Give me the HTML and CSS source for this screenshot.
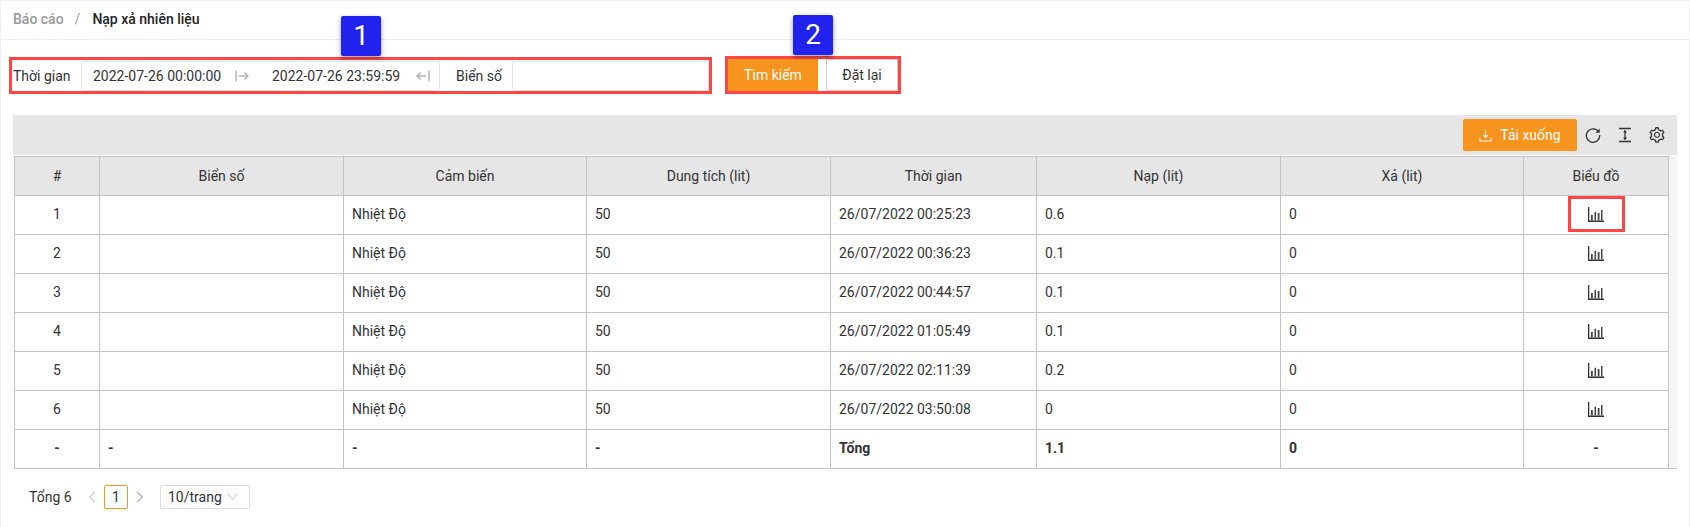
FILE: index.html
```html
<!DOCTYPE html>
<html lang="en">
<head>
    <meta charset="UTF-8">
    <title>Nạp xả nhiên liệu</title>
    <link rel="stylesheet" href="styles.css">
</head>
<body>
<svg class="defs" width="0" height="0">
    <symbol id="chart" viewBox="0 0 16 15">
        <path d="M0 0h1.300v13.400H16V15H0z" fill="#333"/>
        <path d="M3 8h1.800v5.400H3zM6.500 4.700h1.500v8.700H6.500zM9.700 6h1.800v7.400H9.700zM13 3h1.500v10.400H13z" fill="#444"/>
    </symbol>
</svg>
<div class="page">
    <div class="breadcrumb">
        <span class="crumb">Báo cáo</span>
        <span class="crumb-sep">/</span>
        <span class="crumb-now">Nạp xả nhiên liệu</span>
    </div>

    <div class="filter-row">
        <div class="filter-box">
            <span class="mark mark-one">1</span>
            <span class="label label-time">Thời gian</span>
            <div class="range">
                <span class="date date-from">2022-07-26 00:00:00</span>
                <svg class="arrow arrow-from" viewBox="0 0 14 12"><path d="M1 .5v11M4 6h9M9.500 2.500 13 6 9.500 9.500" fill="none" stroke="#b4b4b4" stroke-width="1.500"/></svg>
                <span class="date date-to">2022-07-26 23:59:59</span>
                <svg class="arrow arrow-to" viewBox="0 0 14 12"><path d="M13 .5v11M10 6H1M4.500 2.500 1 6l3.500 3.500" fill="none" stroke="#b4b4b4" stroke-width="1.500"/></svg>
            </div>
            <span class="label label-plate">Biển số</span>
            <div class="plate-input"></div>
        </div>
        <div class="button-box">
            <span class="mark mark-two">2</span>
            <button class="btn btn-search">Tìm kiếm</button>
            <button class="btn btn-reset">Đặt lại</button>
        </div>
    </div>

    <div class="toolbar">
        <button class="btn-download">
            <svg class="download-icon" viewBox="0 0 14 14"><path d="M7 1v8M4.500 6.500 7 9l2.500-2.500M1 9.500V13h12V9.500" fill="none" stroke="#fff" stroke-width="1.100"/></svg>
            Tải xuống
        </button>
        <svg class="tool-icon" viewBox="0 0 16 16"><path d="M13.800 5.200A6.700 6.700 0 1 0 14.700 8" fill="none" stroke="#333" stroke-width="1.300"/><path d="M14.700 1.500v4.200h-4.200z" fill="#333"/></svg>
        <svg class="tool-icon" viewBox="0 0 16 16"><path d="M2 1.500h12M2 14.500h12M8 3.500v9" fill="none" stroke="#333" stroke-width="1.300"/><path d="M6 5.500 8 3l2 2.500zM6 10.500 8 13l2-2.500z" fill="#333"/></svg>
        <svg class="tool-icon tool-gear" viewBox="0 0 1024 1024"><path fill="#333" d="M924.8 625.7l-65.5-56c3.1-19 4.7-38.400 4.700-57.800s-1.600-38.800-4.700-57.800l65.500-56a32.030 32.030 0 0 0 9.300-35.200l-.9-2.600a443.740 443.740 0 0 0-79.700-137.900l-1.800-2.100a32.120 32.120 0 0 0-35.100-9.500l-81.300 28.900c-30-24.600-63.500-44-99.700-57.600l-15.700-85a32.050 32.050 0 0 0-25.800-25.700l-2.700-.5c-52.100-9.400-106.900-9.400-159 0l-2.700.5a32.050 32.050 0 0 0-25.800 25.700l-15.800 85.400a351.860 351.860 0 0 0-99 57.400l-81.900-29.100a32 32 0 0 0-35.100 9.500l-1.800 2.100a446.020 446.020 0 0 0-79.700 137.900l-.9 2.600c-4.500 12.500-.8 26.500 9.300 35.200l66.300 56.600c-3.100 18.800-4.600 38-4.600 57.100 0 19.200 1.500 38.400 4.600 57.100L99 625.500a32.030 32.030 0 0 0-9.300 35.200l.9 2.600c18.100 50.400 44.900 96.900 79.700 137.900l1.800 2.100a32.120 32.120 0 0 0 35.100 9.500l81.900-29.100c29.800 24.500 63.100 43.900 99 57.400l15.800 85.400a32.050 32.050 0 0 0 25.800 25.700l2.700.5a449.400 449.400 0 0 0 159 0l2.700-.5a32.050 32.050 0 0 0 25.800-25.700l15.700-85a350 350 0 0 0 99.700-57.600l81.300 28.900a32 32 0 0 0 35.100-9.500l1.800-2.100c34.800-41.100 61.600-87.500 79.700-137.900l.9-2.600c4.500-12.300.8-26.300-9.300-35zM788.300 465.900c2.500 15.100 3.800 30.600 3.800 46.100s-1.300 31-3.800 46.100l-6.600 40.100 74.700 63.900a370.030 370.030 0 0 1-42.600 73.600L721 702.800l-31.400 25.800c-23.900 19.600-50.500 35-79.300 45.800l-38.100 14.300-17.900 97a377.500 377.500 0 0 1-85 0l-17.900-97.200-37.800-14.500c-28.500-10.800-55-26.200-78.700-45.700l-31.400-25.900-93.400 33.200c-17-22.900-31.200-47.600-42.600-73.600l75.500-64.500-6.500-40c-2.400-14.900-3.700-30.300-3.700-45.500 0-15.300 1.200-30.600 3.700-45.500l6.500-40-75.500-64.500c11.300-26.100 25.600-50.700 42.600-73.600l93.400 33.200 31.400-25.900c23.700-19.500 50.200-34.900 78.700-45.700l37.900-14.300 17.900-97.200c28.100-3.200 56.800-3.200 85 0l17.900 97 38.100 14.300c28.700 10.800 55.400 26.200 79.300 45.800l31.400 25.800 92.800-32.900c17 22.900 31.200 47.600 42.600 73.600L781.800 426l6.500 39.900zM512 326c-97.200 0-176 78.800-176 176s78.800 176 176 176 176-78.800 176-176-78.800-176-176-176zm79.200 255.200A111.600 111.600 0 0 1 512 614c-29.900 0-58-11.700-79.200-32.800A111.600 111.600 0 0 1 400 502c0-29.900 11.700-58 32.800-79.200C454 401.600 482.100 390 512 390c29.900 0 58 11.600 79.200 32.800A111.600 111.600 0 0 1 624 502c0 29.900-11.700 58-32.800 79.200z"/></svg>
    </div>

    <div class="table-wrap">
        <table class="report">
            <colgroup>
                <col class="col-no"><col class="col-plate"><col class="col-sensor"><col class="col-volume">
                <col class="col-time"><col class="col-fill"><col class="col-drain"><col class="col-chart">
            </colgroup>
            <thead>
                <tr>
                    <th>#</th><th>Biển số</th><th>Cảm biến</th><th>Dung tích (lit)</th>
                    <th>Thời gian</th><th>Nạp (lit)</th><th>Xả (lit)</th><th>Biểu đồ</th>
                </tr>
            </thead>
            <tbody>
                <tr>
                    <td class="center">1</td><td></td><td>Nhiệt Độ</td><td>50</td>
                    <td>26/07/2022 00:25:23</td><td>0.6</td><td>0</td>
                    <td class="center"><span class="chart-mark"><svg class="chart-icon"><use href="#chart"/></svg></span></td>
                </tr>
                <tr>
                    <td class="center">2</td><td></td><td>Nhiệt Độ</td><td>50</td>
                    <td>26/07/2022 00:36:23</td><td>0.1</td><td>0</td>
                    <td class="center"><svg class="chart-icon"><use href="#chart"/></svg></td>
                </tr>
                <tr>
                    <td class="center">3</td><td></td><td>Nhiệt Độ</td><td>50</td>
                    <td>26/07/2022 00:44:57</td><td>0.1</td><td>0</td>
                    <td class="center"><svg class="chart-icon"><use href="#chart"/></svg></td>
                </tr>
                <tr>
                    <td class="center">4</td><td></td><td>Nhiệt Độ</td><td>50</td>
                    <td>26/07/2022 01:05:49</td><td>0.1</td><td>0</td>
                    <td class="center"><svg class="chart-icon"><use href="#chart"/></svg></td>
                </tr>
                <tr>
                    <td class="center">5</td><td></td><td>Nhiệt Độ</td><td>50</td>
                    <td>26/07/2022 02:11:39</td><td>0.2</td><td>0</td>
                    <td class="center"><svg class="chart-icon"><use href="#chart"/></svg></td>
                </tr>
                <tr>
                    <td class="center">6</td><td></td><td>Nhiệt Độ</td><td>50</td>
                    <td>26/07/2022 03:50:08</td><td>0</td><td>0</td>
                    <td class="center"><svg class="chart-icon"><use href="#chart"/></svg></td>
                </tr>
                <tr class="total">
                    <td class="center">-</td><td>-</td><td>-</td><td>-</td>
                    <td>Tổng</td><td>1.1</td><td>0</td><td class="center">-</td>
                </tr>
            </tbody>
        </table>
        <div class="scroll-strip"></div>
    </div>

    <div class="pager">
        <span class="pager-total">Tổng 6</span>
        <svg class="pager-arrow" viewBox="0 0 8 12"><path d="M7 1 1.500 6 7 11" fill="none" stroke="#ccc" stroke-width="1.100"/></svg>
        <span class="pager-item">1</span>
        <svg class="pager-arrow" viewBox="0 0 8 12"><path d="M1 1l5.500 5L1 11" fill="none" stroke="#aaa" stroke-width="1.100"/></svg>
        <div class="pager-size">
            <span>10/trang</span>
            <svg class="size-arrow" viewBox="0 0 11 7"><path d="M.5.500 5.500 6.500 10.500.500" fill="none" stroke="#c4c4c4"/></svg>
        </div>
    </div>
</div>
</body>
</html>
```

FILE: styles.css
```css
*{
    margin: 0;
    padding: 0;
    box-sizing: border-box;
}
body{
    background-color: #ffffff;
    color: #333333;
    font-family: Roboto, "Liberation Sans", sans-serif;
    font-size: 14px;
}
.defs{
    position: absolute;
}
.page{
    height: 527px;
    border-top: 1px solid #f0f0f0;
    border-left: 1px solid #f0f0f0;
    border-right: 1px solid #f0f0f0;
}

/* breadcrumb */
.breadcrumb{
    display: flex;
    align-items: center;
    height: 39px;
    padding: 0 0 3px 12px;
    border-bottom: 1px solid #eeeeee;
    font-size: 14px;
    font-weight: 500;
}
.crumb{
    color: #999999;
}
.crumb-sep{
    margin: 0 12px 0 11px;
    color: #999999;
    font-weight: 400;
}
.crumb-now{
    color: #222222;
}

/* filters */
.filter-row{
    display: flex;
    align-items: flex-end;
    height: 38px;
    margin-top: 16px;
    padding-left: 8px;
}
.filter-box{
    position: relative;
    display: flex;
    align-items: center;
    width: 703px;
    height: 37px;
    border: 3px solid #ff4444;
}
.mark{
    position: absolute;
    top: -44px;
    width: 40px;
    height: 40px;
    border-radius: 2px;
    background-color: #2222ee;
    box-shadow: 0 2px 5px rgba(0, 0, 0, 0.4);
    color: #ffffff;
    font-size: 28px;
    line-height: 40px;
    text-align: center;
}
.mark-one{
    left: 329px;
}
.mark-two{
    left: 65px;
}
.label{
    flex: none;
}
.label-time{
    width: 69px;
    padding-left: 1px;
}
.label-plate{
    width: 72px;
    padding-left: 16px;
}
.range{
    display: flex;
    align-items: center;
    width: 359px;
    height: 30px;
    padding-left: 11px;
    border: 1px solid #e6e6e6;
    border-radius: 2px;
}
.date{
    flex: none;
    width: 128px;
    white-space: nowrap;
}
.arrow{
    flex: none;
    width: 14px;
    height: 12px;
}
.arrow-from{
    margin: 0 23px 0 14px;
}
.arrow-to{
    margin-left: 16px;
}
.plate-input{
    flex: 1;
    height: 30px;
    border: 1px solid #e6e6e6;
    border-radius: 2px;
}
.button-box{
    position: relative;
    display: flex;
    justify-content: space-between;
    width: 176px;
    height: 38px;
    margin-left: 13px;
    border: 3px solid #ff4444;
}
.btn{
    height: 32px;
    font-family: inherit;
    font-size: 14px;
    border-radius: 1px;
}
.btn-search{
    width: 90px;
    border: none;
    background-color: #f7941d;
    color: #ffffff;
}
.btn-reset{
    width: 72px;
    border: 1px solid #cccccc;
    background-color: #ffffff;
    color: #333333;
}

/* toolbar above the table */
.toolbar{
    display: flex;
    align-items: center;
    width: 1664px;
    height: 40px;
    margin: 21px 0 1px 12px;
    padding-right: 11px;
    justify-content: flex-end;
    background-color: #e6e6e6;
}
.btn-download{
    display: flex;
    align-items: center;
    justify-content: center;
    gap: 8px;
    width: 114px;
    height: 32px;
    margin-right: 8px;
    border: none;
    border-radius: 2px;
    background-color: #f7941d;
    color: #ffffff;
    font-family: inherit;
    font-size: 14px;
}
.download-icon{
    width: 13px;
    height: 13px;
}
.tool-icon{
    width: 16px;
    height: 16px;
    margin-left: 16px;
}
.btn-download + .tool-icon{
    margin-left: 0;
}
.tool-gear{
    width: 18px;
    height: 18px;
    margin-left: 15px;
}

/* table */
.table-wrap{
    display: flex;
    width: 1663px;
    margin-left: 13px;
    border-bottom: 1px solid #c4c4c4;
}
.report{
    width: 1654px;
    table-layout: fixed;
    border-collapse: collapse;
}
.col-no{ width: 85px; }
.col-plate{ width: 244px; }
.col-sensor{ width: 243px; }
.col-volume{ width: 244px; }
.col-time{ width: 206px; }
.col-fill{ width: 244px; }
.col-drain{ width: 243px; }
.col-chart{ width: 145px; }
.report th,
.report td{
    height: 39px;
    border: 1px solid #c4c4c4;
    padding: 0 8px;
    text-align: left;
    vertical-align: middle;
}
.report td{
    padding-bottom: 2px;
}
.report th{
    background-color: #e6e6e6;
    font-weight: 400;
    text-align: center;
}
.report .center{
    text-align: center;
}
.report .total td{
    height: 38px;
    border-bottom: none;
    font-weight: 700;
}
.scroll-strip{
    flex: 1;
    background-color: #f5f5f5;
}
.chart-icon{
    display: inline-block;
    width: 16px;
    height: 15px;
    vertical-align: middle;
}
.chart-mark{
    display: inline-flex;
    align-items: center;
    justify-content: center;
    width: 57px;
    height: 36px;
    border: 3px solid #ff4444;
    vertical-align: middle;
}

/* pagination */
.pager{
    display: flex;
    align-items: center;
    height: 24px;
    margin-top: 16px;
    padding-left: 28px;
}
.pager-total{
    width: 59px;
}
.pager-arrow{
    width: 8px;
    height: 12px;
}
.pager-item{
    width: 24px;
    height: 24px;
    margin: 0 8px;
    border: 1px solid #f7941d;
    border-radius: 2px;
    line-height: 22px;
    text-align: center;
}
.pager-size{
    display: flex;
    align-items: center;
    justify-content: space-between;
    width: 90px;
    height: 24px;
    margin-left: 16px;
    padding: 0 11px 0 7px;
    border: 1px solid #dddddd;
    border-radius: 2px;
}
.size-arrow{
    width: 11px;
    height: 7px;
}
```
